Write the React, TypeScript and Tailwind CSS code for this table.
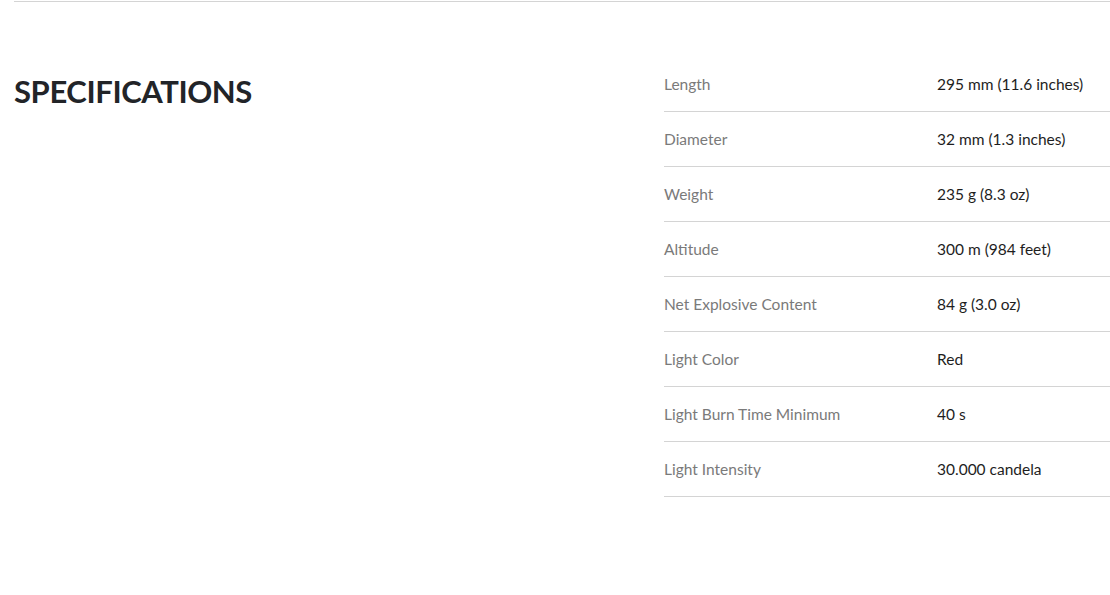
import React from "react";

const specs: [string, string][] = [
  ["Length", "295 mm (11.6 inches)"],
  ["Diameter", "32 mm (1.3 inches)"],
  ["Weight", "235 g (8.3 oz)"],
  ["Altitude", "300 m (984 feet)"],
  ["Net Explosive Content", "84 g (3.0 oz)"],
  ["Light Color", "Red"],
  ["Light Burn Time Minimum", "40 s"],
  ["Light Intensity", "30.000 candela"],
];

export default function App() {
  return (
    <div className="min-h-[595px] bg-white pt-px pl-[14px] font-['Lato','Open_Sans',sans-serif]">
      <div className="border-t border-[#d4d4d4]" />
      <div className="flex pt-[55px]">
        <div className="w-[650px] shrink-0">
          <h2 className="mt-[14px] text-[31px] leading-[40px] font-bold tracking-[-0.4px] text-[#222428]">
            SPECIFICATIONS
          </h2>
        </div>
        <div className="flex-1">
          {specs.map(([label, value]) => (
            <div
              key={label}
              className="grid h-[55px] grid-cols-[273px_1fr] items-center border-b border-[#d4d4d4] pt-[2px] text-[15.5px]"
            >
              <span className="text-[#7a7a7a]">{label}</span>
              <span className="text-[#1e1e1e]">{value}</span>
            </div>
          ))}
        </div>
      </div>
    </div>
  );
}
